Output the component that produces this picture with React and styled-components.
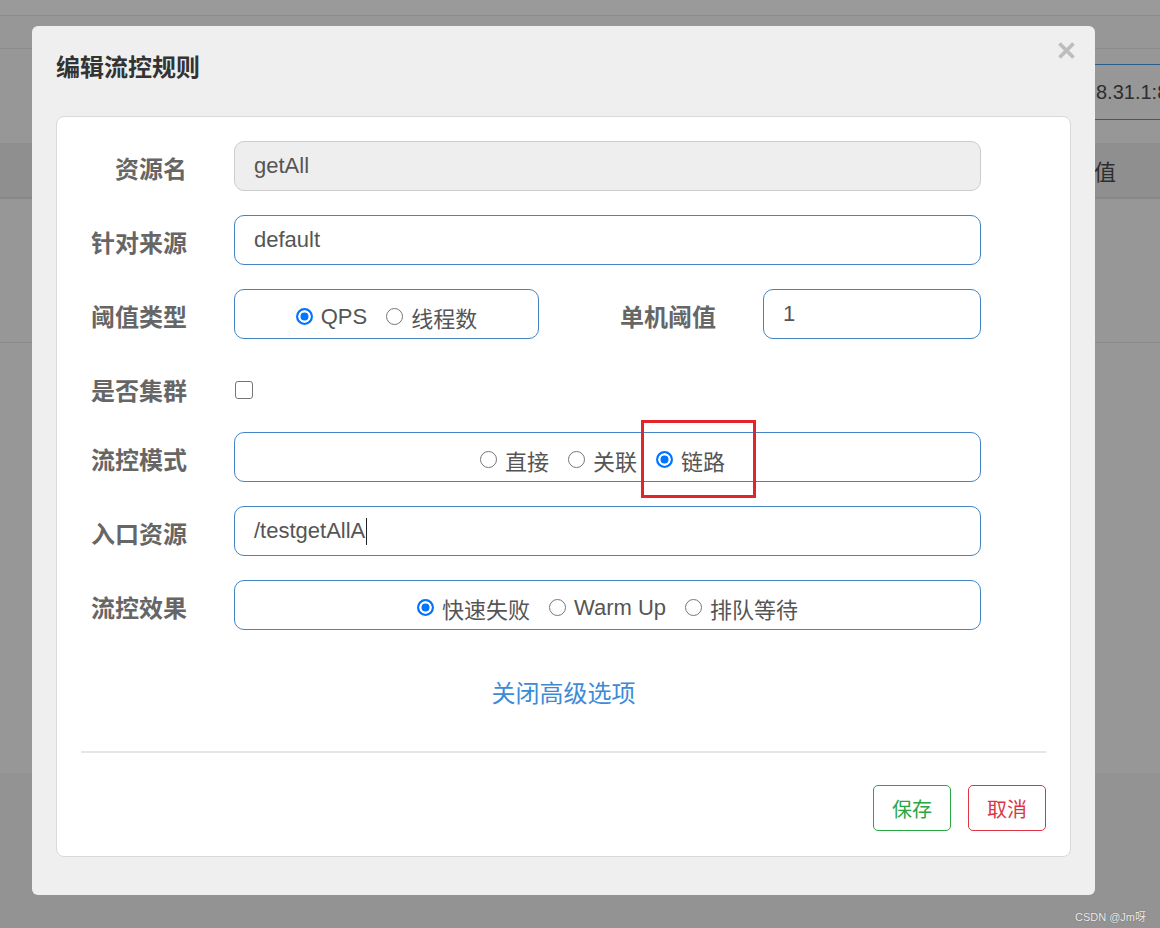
import React from "react";
import styled, { createGlobalStyle } from "styled-components";

const GlobalStyle = createGlobalStyle`
  html, body { margin: 0; padding: 0; }
  body {
    font-family: "Liberation Sans", "Noto Sans CJK SC", sans-serif;
  }
`;

const Screen = styled.div`
  position: relative;
  width: 1160px;
  height: 928px;
  overflow: hidden;
  background: #979797;
  display: flex;
  flex-direction: column;
`;

/* dimmed page behind the dialog */
const PageTop = styled.div`
  height: 15px;
  background: #9a9a9a;
  border-bottom: 1px solid #8b8b8b;
`;
const PageNav = styled.div`
  height: 32px;
  border-bottom: 1px solid #8b8b8b;
`;
const PageToolbar = styled.div`
  height: 94px;
  display: flex;
  justify-content: flex-end;
  align-items: flex-start;
  padding-top: 15px;
  box-sizing: border-box;
`;
const HostBox = styled.div`
  width: 110px;
  height: 56px;
  margin-right: -25px;
  box-sizing: border-box;
  border: 1px solid #2c5d8c;
  border-radius: 6px;
  padding-left: 20px;
  display: flex;
  align-items: center;
  font-size: 20px;
  color: #2e2e2e;
  white-space: nowrap;
  overflow: hidden;
`;
const TableHead = styled.div`
  height: 54px;
  background: #8f8f8f;
  border-bottom: 2px solid #888;
  display: flex;
  justify-content: flex-end;
  align-items: center;
  padding-right: 44px;
  font-size: 22px;
  color: #2e2e2e;
`;
const TableRow = styled.div`
  height: 143px;
  border-bottom: 1px solid #8b8b8b;
`;
const PageRest = styled.div`
  height: 430px;
`;
const PageFoot = styled.div`
  flex: 1;
  background: #939393;
`;

/* dialog */
const Modal = styled.div`
  position: absolute;
  left: 32px;
  top: 26px;
  width: 1063px;
  height: 869px;
  box-sizing: border-box;
  background: #efefef;
  border-radius: 6px;
  padding: 0 24px 38px;
  display: flex;
  flex-direction: column;
`;
const ModalHeader = styled.div`
  height: 91px;
  padding-top: 28px;
  box-sizing: border-box;
`;
const Title = styled.h4`
  margin: 0;
  font-size: 24px;
  line-height: 28px;
  font-weight: bold;
  color: #333;
`;
const Close = styled.button`
  position: absolute;
  top: 15px;
  right: 19px;
  width: 19px;
  height: 19px;
  padding: 0;
  border: 0;
  background: none;
  display: flex;
`;
const Card = styled.div`
  flex: 1;
  background: #fff;
  border: 1px solid #d9d9d9;
  border-radius: 8px;
  padding: 24px 24px 25px;
  display: flex;
  flex-direction: column;
`;
const Form = styled.div`
  display: flex;
  flex-direction: column;
  gap: 24px;
`;
const Row = styled.div`
  display: grid;
  grid-template-columns: 106px 747px;
  column-gap: 47px;
  height: ${(p) => p.$h || 50}px;
`;
const Label = styled.div`
  text-align: right;
  font-size: 24px;
  font-weight: bold;
  color: #666;
  line-height: 42px;
  padding-top: 8px;
  white-space: nowrap;
`;
const SideLabel = styled(Label)`
  flex: 1;
  padding-right: 47px;
`;
const Field = styled.div`
  position: relative;
  box-sizing: border-box;
  height: 50px;
  width: ${(p) => (p.$w ? `${p.$w}px` : "auto")};
  border: 1px solid ${(p) => (p.$disabled ? "#cccccc" : "#4284c4")};
  background: ${(p) => (p.$disabled ? "#eeeeee" : "#fff")};
  border-radius: 10px;
  padding: 0 ${(p) => p.$pr || 19}px 0 19px;
  display: flex;
  align-items: center;
  justify-content: ${(p) => (p.$center ? "center" : "flex-start")};
  gap: 19px;
  font-size: 22px;
  color: #555;
`;
const Inline = styled.div`
  display: flex;
  align-items: flex-start;
`;
const Value = styled.span`
  display: flex;
  align-items: center;
`;
const Caret = styled.span`
  display: inline-block;
  width: 1px;
  height: 27px;
  background: #222;
  margin-left: 1px;
`;
const Option = styled.label`
  display: flex;
  align-items: center;
  gap: 8px;
  font-size: 22px;
  color: #555;
  white-space: nowrap;
`;
const OptionText = styled.span`
  padding-top: 6px;
`;
const Radio = styled.input.attrs({ type: "radio" })`
  appearance: none;
  box-sizing: border-box;
  width: 17px;
  height: 17px;
  margin: 4px 0 0;
  border-radius: 50%;
  border: 1.5px solid #767676;
  background: #fff;
  &:checked {
    border: 2px solid #0075ff;
    background: #0075ff;
    box-shadow: inset 0 0 0 2.5px #fff;
  }
`;
const CheckCell = styled.div`
  padding-top: 18px;
  padding-left: 1px;
`;
const Checkbox = styled.input.attrs({ type: "checkbox" })`
  appearance: none;
  box-sizing: border-box;
  width: 18px;
  height: 18px;
  margin: 0;
  border: 1.5px solid #767676;
  border-radius: 3px;
  background: #fff;
`;
const Highlight = styled.div`
  position: absolute;
  left: 406px;
  top: -13px;
  width: 115px;
  height: 78px;
  box-sizing: border-box;
  border: 3px solid #e3242b;
  pointer-events: none;
`;
const Toggle = styled.a`
  display: block;
  margin-top: 47px;
  text-align: center;
  font-size: 24px;
  line-height: 34px;
  color: #3d8bd7;
`;
const Divider = styled.hr`
  margin: 40px 0 0;
  border: 0;
  height: 2px;
  background: #e5e5e5;
`;
const Footer = styled.div`
  display: flex;
  justify-content: flex-end;
  gap: 17px;
  margin-top: 32px;
`;
const Button = styled.button`
  width: 78px;
  height: 46px;
  background: #fff;
  border: 1px solid ${(p) => p.$color};
  color: ${(p) => p.$color};
  border-radius: 5px;
  font-family: inherit;
  font-size: 20px;
  padding: 0;
`;
const Watermark = styled.div`
  position: absolute;
  right: 14px;
  bottom: 4px;
  font-size: 11px;
  color: #eee;
  text-shadow: 0 0 1px #555;
`;

function RadioGroup({ name, options, checked, width, pr, children }) {
  return (
    <Field $center $w={width} $pr={pr}>
      {options.map((o) => (
        <Option key={o}>
          <Radio name={name} defaultChecked={o === checked} />
          <OptionText>{o}</OptionText>
        </Option>
      ))}
      {children}
    </Field>
  );
}

export default function App() {
  return (
    <Screen>
      <GlobalStyle />
      <PageTop />
      <PageNav />
      <PageToolbar>
        <HostBox>8.31.1:8719</HostBox>
      </PageToolbar>
      <TableHead>阈值</TableHead>
      <TableRow />
      <PageRest />
      <PageFoot />

      <Modal>
        <ModalHeader>
          <Title>编辑流控规则</Title>
        </ModalHeader>
        <Close aria-label="close">
          <svg width="19" height="19" viewBox="0 0 19 19">
            <path d="M2.5 2.5 L16.5 16.5 M16.5 2.5 L2.5 16.5" stroke="#bdbdbd" strokeWidth="3.8" />
          </svg>
        </Close>
        <Card>
          <Form>
            <Row>
              <Label>资源名</Label>
              <Field $disabled>getAll</Field>
            </Row>
            <Row>
              <Label>针对来源</Label>
              <Field>default</Field>
            </Row>
            <Row>
              <Label>阈值类型</Label>
              <Inline>
                <RadioGroup name="grade" options={["QPS", "线程数"]} checked="QPS" width={305} />
                <SideLabel>单机阈值</SideLabel>
                <Field $w={218}>1</Field>
              </Inline>
            </Row>
            <Row $h={45}>
              <Label>是否集群</Label>
              <CheckCell>
                <Checkbox />
              </CheckCell>
            </Row>
            <Row>
              <Label>流控模式</Label>
              <RadioGroup name="strategy" options={["直接", "关联", "链路"]} checked="链路" pr={29}>
                <Highlight />
              </RadioGroup>
            </Row>
            <Row>
              <Label>入口资源</Label>
              <Field>
                <Value>
                  /testgetAllA
                  <Caret />
                </Value>
              </Field>
            </Row>
            <Row>
              <Label>流控效果</Label>
              <RadioGroup name="behavior" options={["快速失败", "Warm Up", "排队等待"]} checked="快速失败" />
            </Row>
          </Form>
          <Toggle>关闭高级选项</Toggle>
          <Divider />
          <Footer>
            <Button $color="#28a745">保存</Button>
            <Button $color="#dc3545">取消</Button>
          </Footer>
        </Card>
      </Modal>
      <Watermark>CSDN @Jm呀</Watermark>
    </Screen>
  );
}
